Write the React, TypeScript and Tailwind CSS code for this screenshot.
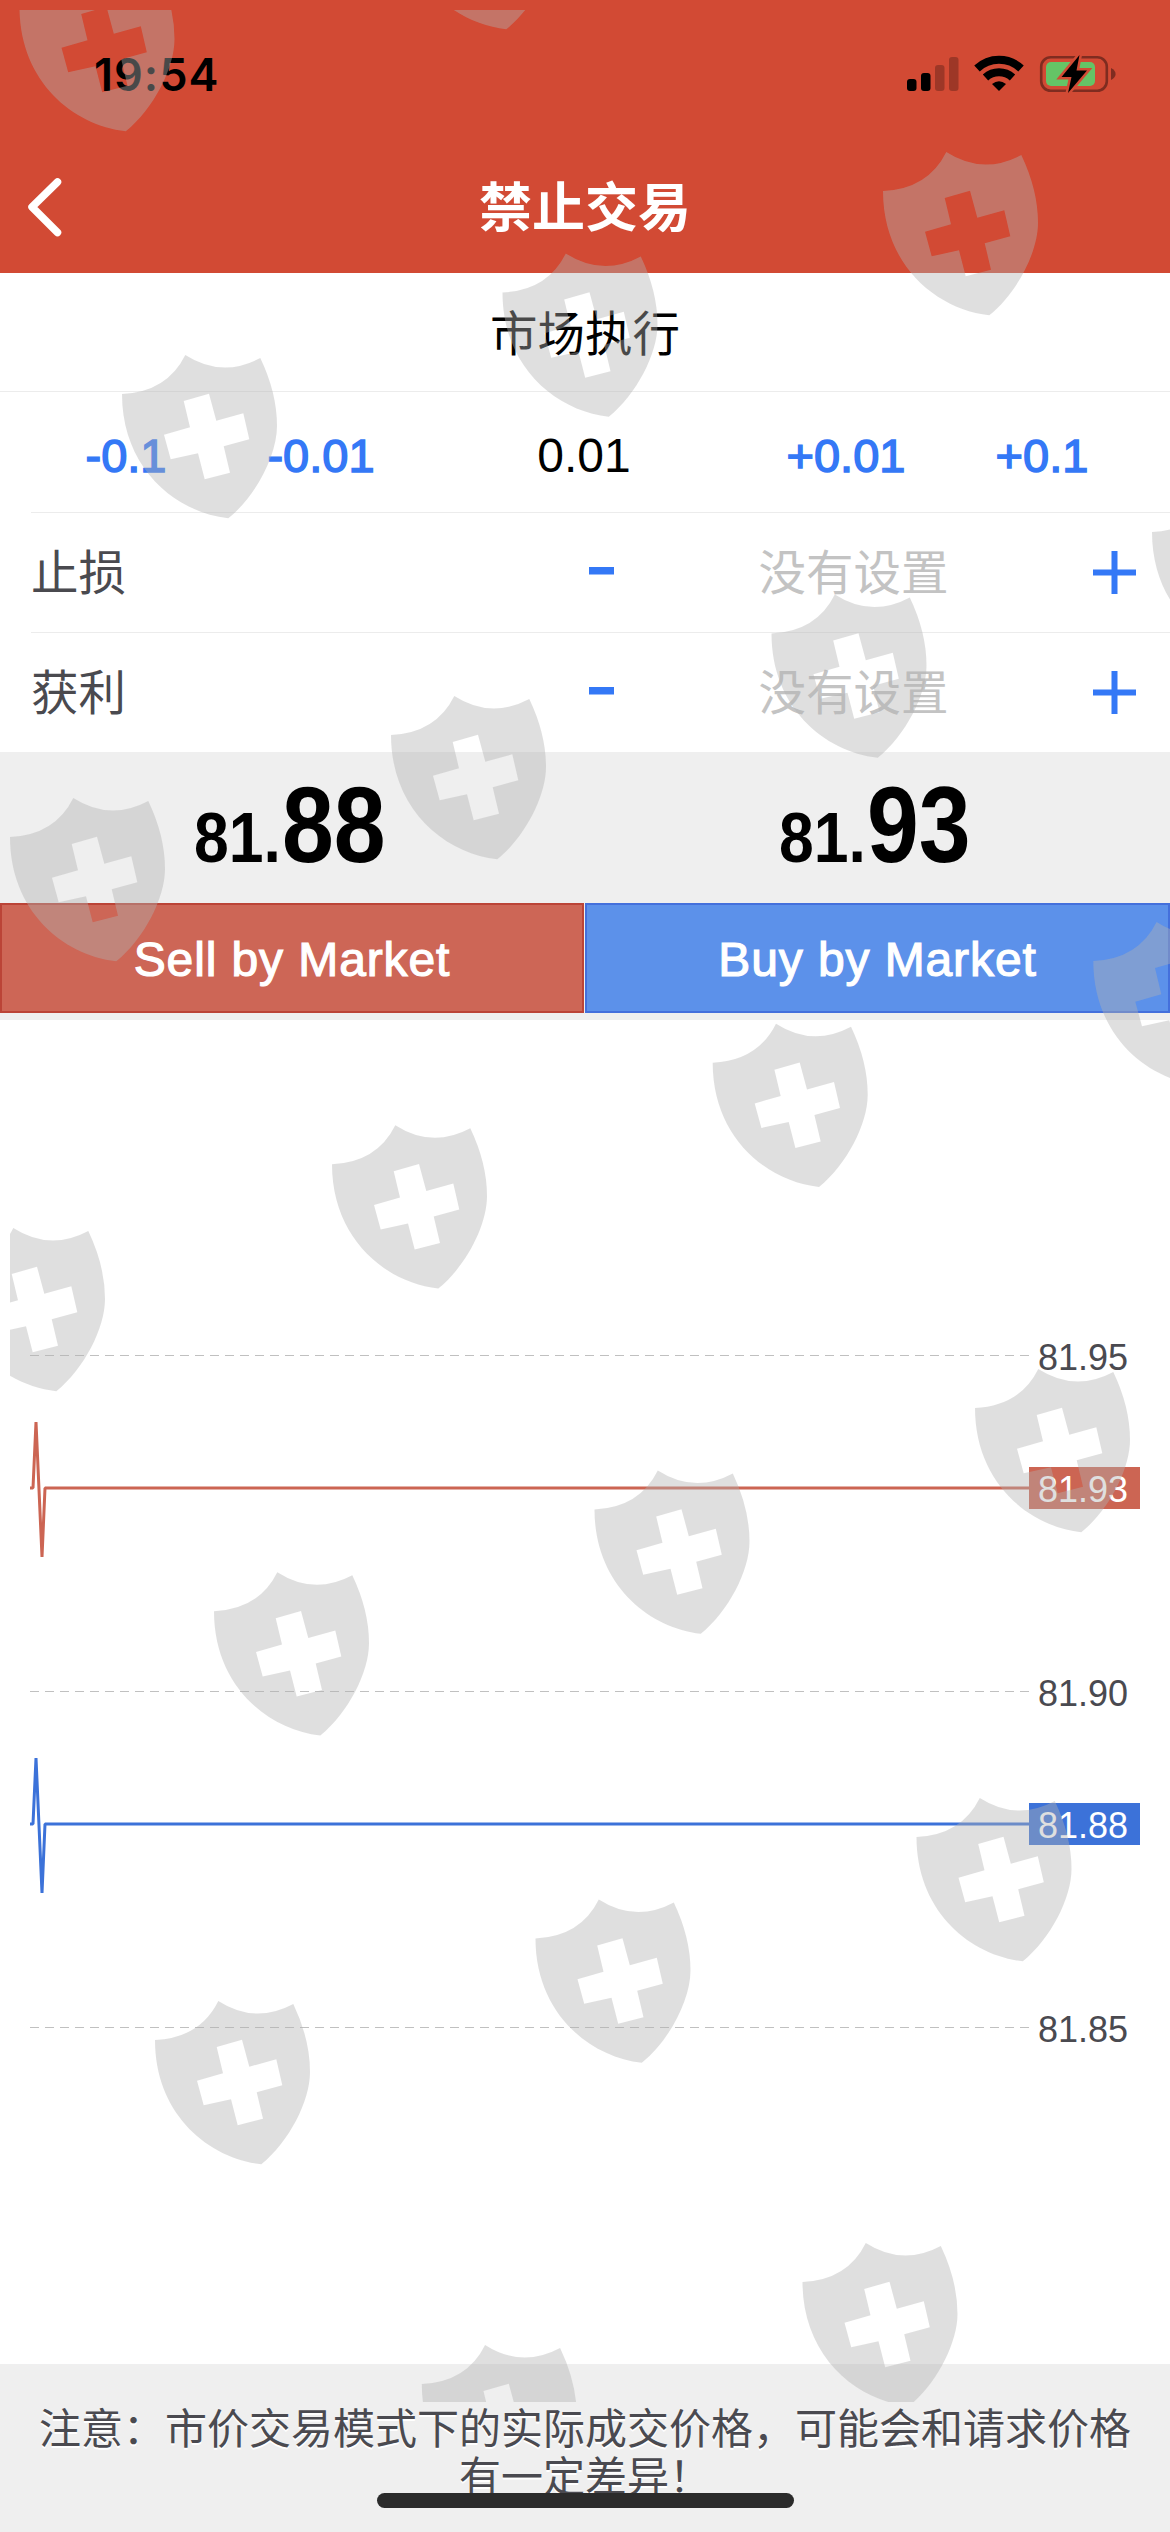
import React from 'react';

const BLUE = '#3478f6';

// Top-left corner of every shield in the overlay pattern
const shields = [
  [19.5, -32], [400, -134],
  [883, 152], [502.5, 253.5], [122, 355],
  [1152, 493], [771.5, 594.5], [391, 696], [10, 798],
  [1093.3, 922], [712.7, 1023.7], [332, 1125.3], [-50, 1228],
  [975, 1369], [594.5, 1470.5], [214, 1572.3],
  [916.5, 1798], [535.5, 1899.5], [155, 2001],
  [802.5, 2243], [421.8, 2345],
];

const SHIELD_PATH =
  'M0 39 Q45 37 63.3 0 Q100 23.500 138.300 3 Q155 38 155 71 C155 100 134 141 106.300 163.300 C52 157 0 112 0 39Z ' +
  'M61.700 46 L68 72.300 L42 79.700 L48.700 104.300 L76 98.300 L82.700 124.300 L108 117.700 L101.700 91.300 L127.300 84.300 L121.300 58.300 L94.300 65.700 L87 38.700Z';

const ShieldOverlay: React.FC = () => (
  <svg
    className="pointer-events-none absolute left-0 top-0"
    width="1170"
    height="2532"
    viewBox="0 0 1170 2532"
    aria-hidden="true"
  >
    <clipPath id="overlay-area">
      <rect x="10" y="10" width="1160" height="2392" />
    </clipPath>
    <g clipPath="url(#overlay-area)" fill="#b2b2b2" fillOpacity="0.41" fillRule="evenodd">
      {shields.map(([x, y]) => (
        <path key={`${x}-${y}`} d={SHIELD_PATH} transform={`translate(${x} ${y})`} />
      ))}
    </g>
  </svg>
);

const StatusBar: React.FC = () => (
  <div className="flex h-[141px] items-start justify-between pl-[94px] pr-[54px]">
    <span className="mt-[48px] font-[Inter] text-[45px] font-semibold leading-[54px] tracking-[1px] text-black">19:54</span>
    <svg className="mt-[50px]" width="209" height="48" viewBox="907 50 209 48">
      <rect x="907" y="79" width="9.500" height="12" rx="3" />
      <rect x="921" y="73" width="9.500" height="18" rx="3" />
      <rect x="935" y="65" width="9.500" height="26" rx="3" opacity="0.25" />
      <rect x="949" y="57" width="9.500" height="34" rx="3" opacity="0.25" />
      <g fill="none" stroke="#000" strokeWidth="8">
        <path d="M977 68.500 A32 32 0 0 1 1021 68.500" />
        <path d="M985.500 77.500 A20 20 0 0 1 1012.500 77.500" />
      </g>
      <path d="M999 91 L992 84 Q999 78.500 1006 84Z" />
      <rect x="1041.200" y="57.200" width="65.600" height="33.600" rx="9.500" fill="none" stroke="#7f2c20" strokeWidth="2.600" />
      <path d="M1111 68 Q1115.600 70.500 1115.600 74 Q1115.600 77.500 1111 80Z" fill="#7f2c20" />
      <rect x="1046" y="62" width="49" height="24" rx="5" fill="#65c466" />
      <path
        d="M1079.500 55 L1061.500 77 H1071.500 L1068 93 L1087 70.500 H1076.500Z"
        stroke="#d24a34"
        strokeWidth="5"
        paintOrder="stroke"
      />
    </svg>
  </div>
);

const Header: React.FC = () => (
  <header className="h-[273px] bg-[#d24a34]">
    <StatusBar />
    <div className="flex h-[132px] items-center justify-between px-7">
      <svg className="w-[60px]" width="60" height="64" viewBox="0 0 60 64" fill="none" stroke="#fff" strokeWidth="7.500" strokeLinecap="round" strokeLinejoin="round">
        <path d="M29.500 7 L4 32 L29.500 57.500" />
      </svg>
      <h1 className="pt-[3px] text-[53px] font-bold leading-none text-white">禁止交易</h1>
      <span className="w-[60px]" />
    </div>
  </header>
);

interface StepRowProps {
  label: string;
}

const StepRow: React.FC<StepRowProps> = ({ label }) => (
  <div className="ml-[31px] flex h-[120px] items-center border-t border-[#ececec] text-[47.500px]">
    <span className="w-[558px] pt-0.5 text-[#4a4a4f]">{label}</span>
    <svg className="mb-1" width="25" height="8" viewBox="0 0 25 8">
      <rect width="25" height="7.500" fill={BLUE} />
    </svg>
    <span className="w-[479px] pt-0.5 text-center text-[#c3c3c3]">没有设置</span>
    <svg width="43" height="43" viewBox="0 0 43 43" fill={BLUE}>
      <rect y="18.500" width="43" height="6" />
      <rect x="18.500" width="6" height="43" />
    </svg>
  </div>
);

const VolumeRow: React.FC = () => (
  <div className="ml-[34px] flex h-[120px] items-center pt-2 text-[47px] text-[#3478f6]">
    <button className="w-[184px] text-center [-webkit-text-stroke:1.5px_currentColor]">-0.1</button>
    <button className="w-[206px] text-center [-webkit-text-stroke:1.5px_currentColor]">-0.01</button>
    <span className="w-[320px] text-center text-[48px] text-black">0.01</span>
    <button className="w-[204px] text-center [-webkit-text-stroke:1.5px_currentColor]">+0.01</button>
    <button className="w-[188px] text-center [-webkit-text-stroke:1.5px_currentColor]">+0.1</button>
  </div>
);

interface PriceProps {
  whole: string;
  pips: string;
}

const Price: React.FC<PriceProps> = ({ whole, pips }) => (
  <div className="flex flex-1 items-baseline pl-[194px] font-bold leading-[146px] text-black">
    <span className="w-[88px] origin-left scale-x-[0.88] text-[71px]">{whole}</span>
    <span className="origin-left scale-x-[0.87] text-[107px]">{pips}</span>
  </div>
);

const gridLines = [
  { y: 335.5, label: '81.95' },
  { y: 671.5, label: '81.90' },
  { y: 1007.5, label: '81.85' },
];

const quotes = [
  { y: 468, label: '81.93', color: '#cc6553' },
  { y: 804, label: '81.88', color: '#3c72d9' },
];

const TickChart: React.FC = () => (
  <svg className="block" width="1170" height="1344" viewBox="0 0 1170 1344" fontSize="36">
    {gridLines.map((line) => (
      <g key={line.label}>
        <path d={`M30 ${line.y} H1030`} stroke="#c0c0c0" strokeWidth="1.200" strokeDasharray="9 6" />
        <text x="1038" y={line.y + 14.5} fill="#4a4a50">{line.label}</text>
      </g>
    ))}
    {quotes.map((quote) => (
      <g key={quote.label}>
        <path
          d={`M30 ${quote.y} H33 L36 ${quote.y - 66} L42 ${quote.y + 69} L45 ${quote.y} H1030`}
          fill="none"
          stroke={quote.color}
          strokeWidth="3"
          strokeLinejoin="bevel"
        />
        <rect x="1029" y={quote.y - 21} width="111" height="42" fill={quote.color} />
        <text x="1038" y={quote.y + 14} fill="#fff">{quote.label}</text>
      </g>
    ))}
  </svg>
);

const App: React.FC = () => {
  return (
    <div className="relative flex h-[2532px] w-[1170px] flex-col overflow-hidden bg-white font-['Liberation_Sans','Noto_Sans_CJK_SC',sans-serif]">
      <Header />

      <div className="flex h-[119px] items-center justify-center border-b border-[#ececec] pt-1.5 text-[47.500px] text-black">
        市场执行
      </div>
      <VolumeRow />
      <StepRow label="止损" />
      <StepRow label="获利" />

      {/* Bid / ask prices and order buttons */}
      <div className="h-[268px] bg-[#efefef]">
        <div className="flex h-[151px]">
          <Price whole="81." pips="88" />
          <Price whole="81." pips="93" />
        </div>
        <div className="flex h-[110px] text-[48px] text-white">
          <button className="w-[584px] border-2 border-[#bb4437] bg-[#cd6656] pt-1 tracking-[0.9px] [-webkit-text-stroke:1.2px_white]">
            Sell by Market
          </button>
          <button className="ml-px flex-1 border-2 border-[#4470dc] bg-[#5c91ea] pt-1 tracking-[0.9px] [-webkit-text-stroke:1.2px_white]">
            Buy by Market
          </button>
        </div>
      </div>

      <TickChart />

      <footer className="relative flex-1 bg-[#efefef] px-10 pt-[42px] text-center text-[42px] leading-[48px] text-[#4a4a50] [text-shadow:0_2px_0_#fff]">
        <p className="-mx-4">
          注意：市价交易模式下的实际成交价格，可能会和请求价格
          <br />
          有一定差异！
        </p>
        <div className="absolute bottom-6 left-[377px] h-[15px] w-[417px] rounded-full bg-[#2b2b2b]" />
      </footer>

      <ShieldOverlay />
    </div>
  );
};

export default App;
